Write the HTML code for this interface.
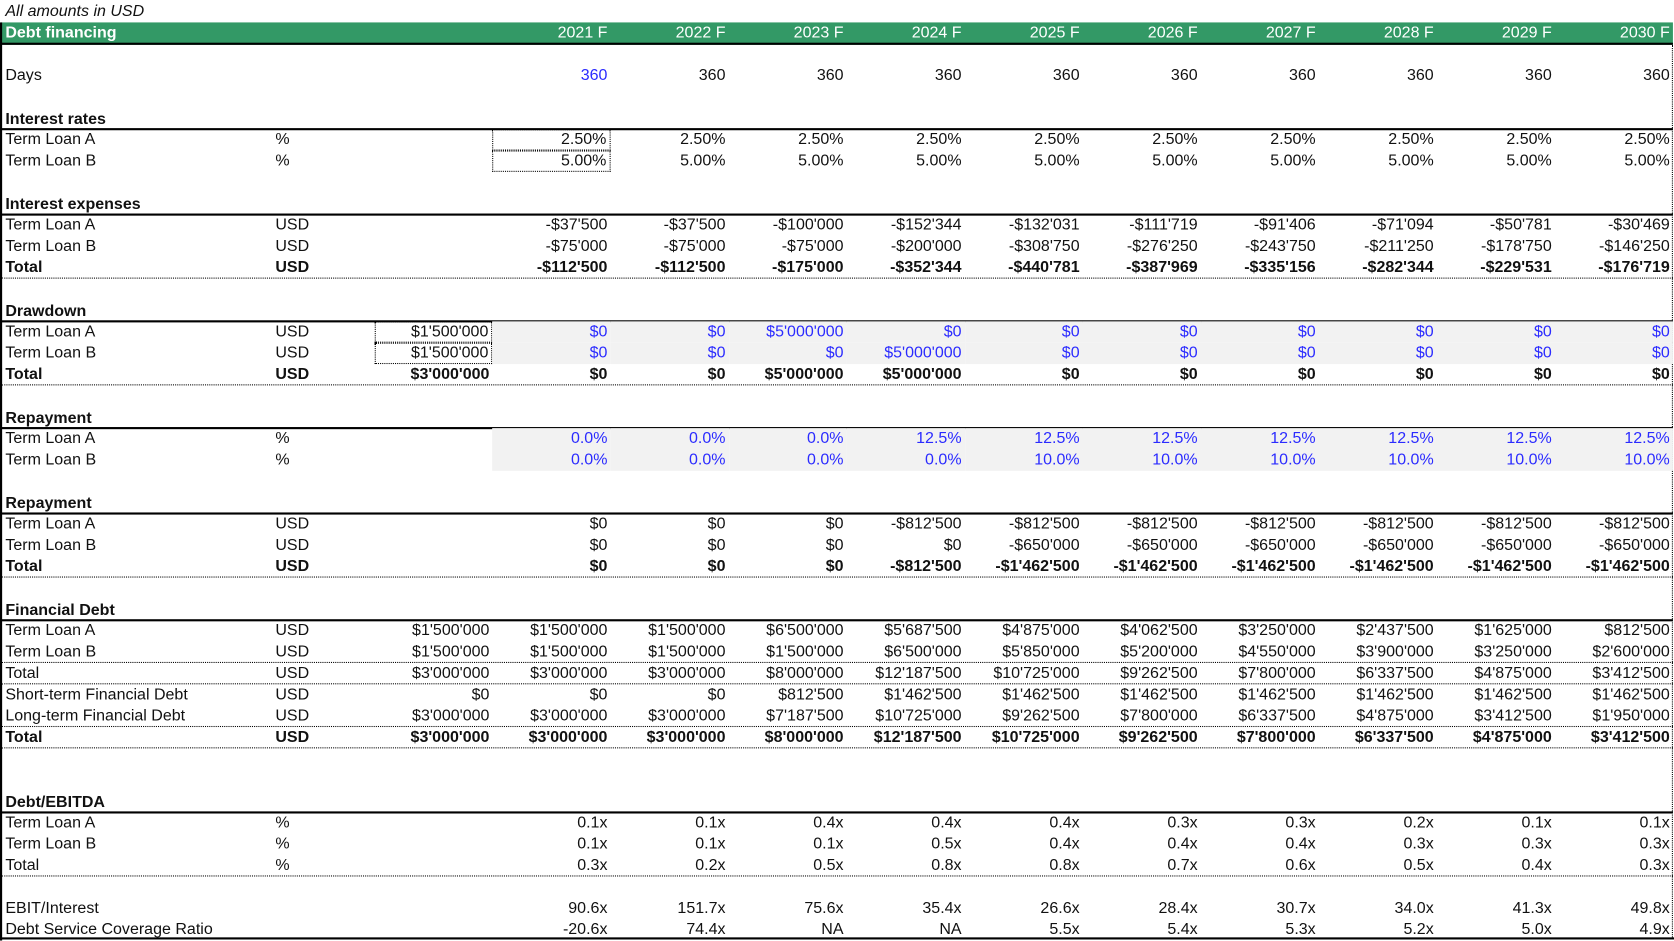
<!DOCTYPE html>
<html><head><meta charset="utf-8"><style>
html,body{margin:0;padding:0;background:#fff;overflow:hidden}
#w{position:absolute;left:0;top:0;width:1568px;height:880px;transform:scale(1.06760);transform-origin:0 0;font-family:"Liberation Sans",Arial,sans-serif;font-size:15px;color:#111}
.r{position:absolute;left:1px;width:1566px;height:20px;line-height:20px;display:flex;white-space:nowrap}
.l{width:257px;padding-left:4px;box-sizing:border-box}
.u{width:93px}
.c{width:110.6px;text-align:right;padding-right:3px;box-sizing:border-box;height:20px}
.b{font-weight:bold}
.h{border-bottom:2px solid #000;height:19px;line-height:21px}
.t{border-bottom:1px dotted #000;height:19px}
.bl{color:#2b2bff}
.g{background:#f2f2f2}
.bx{border:1px dotted #000;line-height:18px}
#hd{position:absolute;left:1px;top:21px;width:1566px;height:19px;background:#339966;color:#fff;border-bottom:2px solid #000;display:flex;line-height:20px}
</style></head><body><div id="w">
<div style="position:absolute;left:5px;top:1px;line-height:20px;font-style:italic">All amounts in USD</div>
<div id="hd"><div class="l b">Debt financing</div><div class="u"></div><div class="c"></div><div class="c">2021 F</div><div class="c">2022 F</div><div class="c">2023 F</div><div class="c">2024 F</div><div class="c">2025 F</div><div class="c">2026 F</div><div class="c">2027 F</div><div class="c">2028 F</div><div class="c">2029 F</div><div class="c">2030 F</div></div>
<div style="position:absolute;left:0;top:21px;width:2px;height:860px;background:#000"></div>
<div style="position:absolute;left:1566px;top:42px;width:0;height:838px;border-left:1px dotted #000"></div>
<div style="position:absolute;left:0;top:878px;width:1568px;height:2px;background:#000"></div>

<div class="r" style="top:61px"><div class="l">Days</div><div class="u"></div><div class="c"></div><div class="c bl">360</div><div class="c">360</div><div class="c">360</div><div class="c">360</div><div class="c">360</div><div class="c">360</div><div class="c">360</div><div class="c">360</div><div class="c">360</div><div class="c">360</div></div>

<div class="r b h" style="top:101px"><div class="l">Interest rates</div></div>
<div class="r" style="top:121px"><div class="l">Term Loan A</div><div class="u">%</div><div class="c"></div><div class="c bx">2.50%</div><div class="c">2.50%</div><div class="c">2.50%</div><div class="c">2.50%</div><div class="c">2.50%</div><div class="c">2.50%</div><div class="c">2.50%</div><div class="c">2.50%</div><div class="c">2.50%</div><div class="c">2.50%</div></div>
<div class="r" style="top:141px"><div class="l">Term Loan B</div><div class="u">%</div><div class="c"></div><div class="c bx">5.00%</div><div class="c">5.00%</div><div class="c">5.00%</div><div class="c">5.00%</div><div class="c">5.00%</div><div class="c">5.00%</div><div class="c">5.00%</div><div class="c">5.00%</div><div class="c">5.00%</div><div class="c">5.00%</div></div>

<div class="r b h" style="top:181px"><div class="l">Interest expenses</div></div>
<div class="r" style="top:201px"><div class="l">Term Loan A</div><div class="u">USD</div><div class="c"></div><div class="c">-$37'500</div><div class="c">-$37'500</div><div class="c">-$100'000</div><div class="c">-$152'344</div><div class="c">-$132'031</div><div class="c">-$111'719</div><div class="c">-$91'406</div><div class="c">-$71'094</div><div class="c">-$50'781</div><div class="c">-$30'469</div></div>
<div class="r" style="top:221px"><div class="l">Term Loan B</div><div class="u">USD</div><div class="c"></div><div class="c">-$75'000</div><div class="c">-$75'000</div><div class="c">-$75'000</div><div class="c">-$200'000</div><div class="c">-$308'750</div><div class="c">-$276'250</div><div class="c">-$243'750</div><div class="c">-$211'250</div><div class="c">-$178'750</div><div class="c">-$146'250</div></div>
<div class="r b t" style="top:241px"><div class="l">Total</div><div class="u">USD</div><div class="c"></div><div class="c">-$112'500</div><div class="c">-$112'500</div><div class="c">-$175'000</div><div class="c">-$352'344</div><div class="c">-$440'781</div><div class="c">-$387'969</div><div class="c">-$335'156</div><div class="c">-$282'344</div><div class="c">-$229'531</div><div class="c">-$176'719</div></div>

<div class="r b h" style="top:281px"><div class="l">Drawdown</div></div>
<div class="r" style="top:301px"><div class="l">Term Loan A</div><div class="u">USD</div><div class="c bx">$1'500'000</div><div class="c g bl">$0</div><div class="c g bl">$0</div><div class="c g bl">$5'000'000</div><div class="c g bl">$0</div><div class="c g bl">$0</div><div class="c g bl">$0</div><div class="c g bl">$0</div><div class="c g bl">$0</div><div class="c g bl">$0</div><div class="c g bl">$0</div></div>
<div class="r" style="top:321px"><div class="l">Term Loan B</div><div class="u">USD</div><div class="c bx">$1'500'000</div><div class="c g bl">$0</div><div class="c g bl">$0</div><div class="c g bl">$0</div><div class="c g bl">$5'000'000</div><div class="c g bl">$0</div><div class="c g bl">$0</div><div class="c g bl">$0</div><div class="c g bl">$0</div><div class="c g bl">$0</div><div class="c g bl">$0</div></div>
<div class="r b t" style="top:341px"><div class="l">Total</div><div class="u">USD</div><div class="c">$3'000'000</div><div class="c">$0</div><div class="c">$0</div><div class="c">$5'000'000</div><div class="c">$5'000'000</div><div class="c">$0</div><div class="c">$0</div><div class="c">$0</div><div class="c">$0</div><div class="c">$0</div><div class="c">$0</div></div>

<div class="r b h" style="top:381px"><div class="l">Repayment</div></div>
<div class="r" style="top:401px"><div class="l">Term Loan A</div><div class="u">%</div><div class="c"></div><div class="c g bl">0.0%</div><div class="c g bl">0.0%</div><div class="c g bl">0.0%</div><div class="c g bl">12.5%</div><div class="c g bl">12.5%</div><div class="c g bl">12.5%</div><div class="c g bl">12.5%</div><div class="c g bl">12.5%</div><div class="c g bl">12.5%</div><div class="c g bl">12.5%</div></div>
<div class="r" style="top:421px"><div class="l">Term Loan B</div><div class="u">%</div><div class="c"></div><div class="c g bl">0.0%</div><div class="c g bl">0.0%</div><div class="c g bl">0.0%</div><div class="c g bl">0.0%</div><div class="c g bl">10.0%</div><div class="c g bl">10.0%</div><div class="c g bl">10.0%</div><div class="c g bl">10.0%</div><div class="c g bl">10.0%</div><div class="c g bl">10.0%</div></div>

<div class="r b h" style="top:461px"><div class="l">Repayment</div></div>
<div class="r" style="top:481px"><div class="l">Term Loan A</div><div class="u">USD</div><div class="c"></div><div class="c">$0</div><div class="c">$0</div><div class="c">$0</div><div class="c">-$812'500</div><div class="c">-$812'500</div><div class="c">-$812'500</div><div class="c">-$812'500</div><div class="c">-$812'500</div><div class="c">-$812'500</div><div class="c">-$812'500</div></div>
<div class="r" style="top:501px"><div class="l">Term Loan B</div><div class="u">USD</div><div class="c"></div><div class="c">$0</div><div class="c">$0</div><div class="c">$0</div><div class="c">$0</div><div class="c">-$650'000</div><div class="c">-$650'000</div><div class="c">-$650'000</div><div class="c">-$650'000</div><div class="c">-$650'000</div><div class="c">-$650'000</div></div>
<div class="r b t" style="top:521px"><div class="l">Total</div><div class="u">USD</div><div class="c"></div><div class="c">$0</div><div class="c">$0</div><div class="c">$0</div><div class="c">-$812'500</div><div class="c">-$1'462'500</div><div class="c">-$1'462'500</div><div class="c">-$1'462'500</div><div class="c">-$1'462'500</div><div class="c">-$1'462'500</div><div class="c">-$1'462'500</div></div>

<div class="r b h" style="top:561px"><div class="l">Financial Debt</div></div>
<div class="r" style="top:581px"><div class="l">Term Loan A</div><div class="u">USD</div><div class="c">$1'500'000</div><div class="c">$1'500'000</div><div class="c">$1'500'000</div><div class="c">$6'500'000</div><div class="c">$5'687'500</div><div class="c">$4'875'000</div><div class="c">$4'062'500</div><div class="c">$3'250'000</div><div class="c">$2'437'500</div><div class="c">$1'625'000</div><div class="c">$812'500</div></div>
<div class="r t" style="top:601px"><div class="l">Term Loan B</div><div class="u">USD</div><div class="c">$1'500'000</div><div class="c">$1'500'000</div><div class="c">$1'500'000</div><div class="c">$1'500'000</div><div class="c">$6'500'000</div><div class="c">$5'850'000</div><div class="c">$5'200'000</div><div class="c">$4'550'000</div><div class="c">$3'900'000</div><div class="c">$3'250'000</div><div class="c">$2'600'000</div></div>
<div class="r t" style="top:621px"><div class="l">Total</div><div class="u">USD</div><div class="c">$3'000'000</div><div class="c">$3'000'000</div><div class="c">$3'000'000</div><div class="c">$8'000'000</div><div class="c">$12'187'500</div><div class="c">$10'725'000</div><div class="c">$9'262'500</div><div class="c">$7'800'000</div><div class="c">$6'337'500</div><div class="c">$4'875'000</div><div class="c">$3'412'500</div></div>
<div class="r" style="top:641px"><div class="l">Short-term Financial Debt</div><div class="u">USD</div><div class="c">$0</div><div class="c">$0</div><div class="c">$0</div><div class="c">$812'500</div><div class="c">$1'462'500</div><div class="c">$1'462'500</div><div class="c">$1'462'500</div><div class="c">$1'462'500</div><div class="c">$1'462'500</div><div class="c">$1'462'500</div><div class="c">$1'462'500</div></div>
<div class="r t" style="top:661px"><div class="l">Long-term Financial Debt</div><div class="u">USD</div><div class="c">$3'000'000</div><div class="c">$3'000'000</div><div class="c">$3'000'000</div><div class="c">$7'187'500</div><div class="c">$10'725'000</div><div class="c">$9'262'500</div><div class="c">$7'800'000</div><div class="c">$6'337'500</div><div class="c">$4'875'000</div><div class="c">$3'412'500</div><div class="c">$1'950'000</div></div>
<div class="r b t" style="top:681px"><div class="l">Total</div><div class="u">USD</div><div class="c">$3'000'000</div><div class="c">$3'000'000</div><div class="c">$3'000'000</div><div class="c">$8'000'000</div><div class="c">$12'187'500</div><div class="c">$10'725'000</div><div class="c">$9'262'500</div><div class="c">$7'800'000</div><div class="c">$6'337'500</div><div class="c">$4'875'000</div><div class="c">$3'412'500</div></div>

<div class="r b h" style="top:741px"><div class="l">Debt/EBITDA</div></div>
<div class="r" style="top:761px"><div class="l">Term Loan A</div><div class="u">%</div><div class="c"></div><div class="c">0.1x</div><div class="c">0.1x</div><div class="c">0.4x</div><div class="c">0.4x</div><div class="c">0.4x</div><div class="c">0.3x</div><div class="c">0.3x</div><div class="c">0.2x</div><div class="c">0.1x</div><div class="c">0.1x</div></div>
<div class="r" style="top:781px"><div class="l">Term Loan B</div><div class="u">%</div><div class="c"></div><div class="c">0.1x</div><div class="c">0.1x</div><div class="c">0.1x</div><div class="c">0.5x</div><div class="c">0.4x</div><div class="c">0.4x</div><div class="c">0.4x</div><div class="c">0.3x</div><div class="c">0.3x</div><div class="c">0.3x</div></div>
<div class="r t" style="top:801px"><div class="l">Total</div><div class="u">%</div><div class="c"></div><div class="c">0.3x</div><div class="c">0.2x</div><div class="c">0.5x</div><div class="c">0.8x</div><div class="c">0.8x</div><div class="c">0.7x</div><div class="c">0.6x</div><div class="c">0.5x</div><div class="c">0.4x</div><div class="c">0.3x</div></div>

<div class="r" style="top:841px"><div class="l">EBIT/Interest</div><div class="u"></div><div class="c"></div><div class="c">90.6x</div><div class="c">151.7x</div><div class="c">75.6x</div><div class="c">35.4x</div><div class="c">26.6x</div><div class="c">28.4x</div><div class="c">30.7x</div><div class="c">34.0x</div><div class="c">41.3x</div><div class="c">49.8x</div></div>
<div class="r" style="top:861px"><div class="l">Debt Service Coverage Ratio</div><div class="u"></div><div class="c"></div><div class="c">-20.6x</div><div class="c">74.4x</div><div class="c">NA</div><div class="c">NA</div><div class="c">5.5x</div><div class="c">5.4x</div><div class="c">5.3x</div><div class="c">5.2x</div><div class="c">5.0x</div><div class="c">4.9x</div></div>
</div></body></html>
